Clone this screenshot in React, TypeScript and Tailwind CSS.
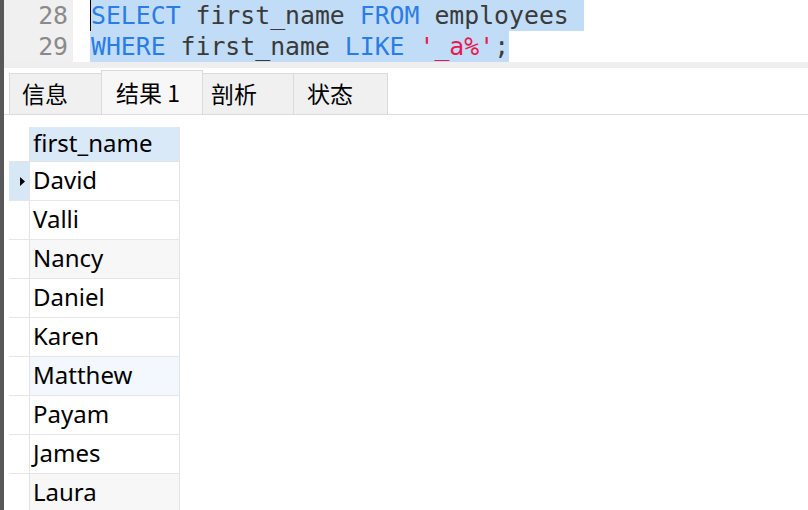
import React from 'react';

const MONO = "font-['DejaVu_Sans_Mono',monospace]";

const ROWS = [
  { name: 'David', bg: 'bg-white', selected: true },
  { name: 'Valli', bg: 'bg-white' },
  { name: 'Nancy', bg: 'bg-[#f7f7f7]' },
  { name: 'Daniel', bg: 'bg-white' },
  { name: 'Karen', bg: 'bg-white' },
  { name: 'Matthew', bg: 'bg-[#f2f8fe]' },
  { name: 'Payam', bg: 'bg-white' },
  { name: 'James', bg: 'bg-white' },
  { name: 'Laura', bg: 'bg-[#f7f7f7]' },
];

const TABS = [
  { label: '信息', w: 'w-[93px]', pl: 'pl-[12px]' },
  { label: '结果 1', w: 'w-[102px]', pl: 'pl-[14px]', active: true },
  { label: '剖析', w: 'w-[92px]', pl: 'pl-[8px]' },
  { label: '状态', w: 'w-[95px]', pl: 'pl-[13px]' },
];

export default function App() {
  return (
    <div className="w-[808px] h-[510px] overflow-hidden flex bg-white">
      {/* left window edge */}
      <div className="w-[4px] shrink-0 bg-[#585858]" />

      <div className="flex-1 flex flex-col min-w-0">
        {/* Editor */}
        <div className={`h-[62px] shrink-0 flex ${MONO} text-[24.8px] leading-[31px]`}>
          <div className="w-[69px] shrink-0 bg-[#f0f0f0] text-right pr-[5px] text-[#8a8a8a]">
            <div className="h-[31px]">28</div>
            <div className="h-[31px]">29</div>
          </div>
          <div className="pl-[17px] flex flex-col whitespace-pre text-[#3a3a3a]">
            <div className="h-[31px] flex">
              <span className="w-px h-[31px] bg-black" />
              <span className="bg-[#c1dcf7]">
                <span className="text-[#2a7de6]">SELECT</span> first_name <span className="text-[#2a7de6]">FROM</span> employees{' '}
              </span>
            </div>
            <div className="h-[31px] flex">
              <span className="bg-[#c1dcf7] pl-px">
                <span className="text-[#2a7de6]">WHERE</span> first_name <span className="text-[#2a7de6]">LIKE</span>{' '}
                <span className="text-[#e8184e]">'_a%'</span>;
              </span>
            </div>
          </div>
        </div>

        {/* splitter */}
        <div className="h-[6px] shrink-0 bg-[#efefef]" />

        {/* Tabs */}
        <div className="h-[47px] shrink-0 flex items-end pl-[5px] border-b border-[#dcdcdc] font-['Noto_Sans_CJK_SC','Noto_Sans',sans-serif] text-[23px] text-black">
          {TABS.map(t => (
            <div
              key={t.label}
              className={`${t.w} ${t.pl} flex items-center pb-[1px] border-t border-x border-[#dadada] -ml-px first:ml-0 ${
                t.active ? 'h-[44px] bg-[#f7f7f7] z-10' : 'h-[41px] bg-[#f0f0f0]'
              }`}
            >
              {t.label}
            </div>
          ))}
        </div>

        {/* Result grid */}
        <div className="shrink-0 pt-[12px] pl-[5px] font-['Noto_Sans',sans-serif] text-[24px] text-black">
          <div className="w-max flex border-b border-[#e3e3e3]">
            <div className="w-[21px] h-[34px] border-r border-[#e3e3e3] bg-white" />
            <div className="w-[150px] h-[34px] border-r border-[#e3e3e3] bg-[#dae9f8] pl-[3px] pb-[2px] flex items-center">
              first_name
            </div>
          </div>
          {ROWS.map(r => (
            <div key={r.name} className="w-max flex border-b border-[#e6e6e6]">
              <div
                className={`w-[21px] h-[38px] border-r border-[#e3e3e3] flex items-center justify-end pr-[4px] ${
                  r.selected ? 'bg-[#d8e7f6]' : 'bg-white'
                }`}
              >
                {r.selected && (
                  <svg width="5" height="9" viewBox="0 0 5 9">
                    <path d="M0 0 L5 4.5 L0 9 Z" fill="#000" />
                  </svg>
                )}
              </div>
              <div className={`w-[150px] h-[38px] border-r border-[#e3e3e3] ${r.bg} pl-[3px] pb-[3px] flex items-center`}>
                {r.name}
              </div>
            </div>
          ))}
        </div>
      </div>
    </div>
  );
}
